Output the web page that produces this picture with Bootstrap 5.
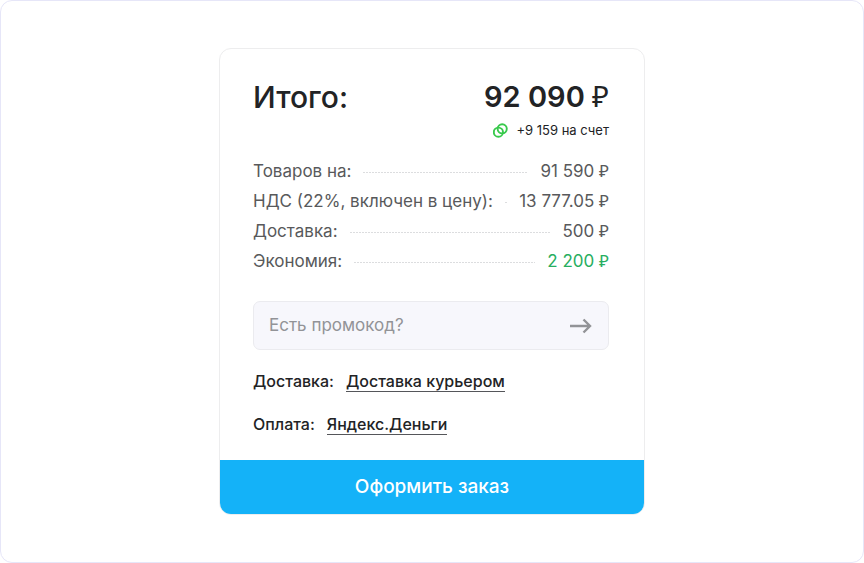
<!DOCTYPE html>
<html lang="ru">
<head>
<meta charset="utf-8">
<meta name="viewport" content="width=device-width, initial-scale=1">
<title>Оформление заказа</title>
<link href="https://cdn.jsdelivr.net/npm/bootstrap@5.3.0/dist/css/bootstrap.min.css" rel="stylesheet">
<style>
body { font-family: Inter, "Noto Sans", sans-serif; color: #222325; background: #fff; }
.page-frame { border: 1px solid #e6e6f8; border-radius: 12px; padding: 47px 16px; }
.order-card { max-width: 426px; border: 1px solid #ededee; border-radius: 12px; }
.order-body { padding: 30px 35px 25px 33px; }
.total { font-size: 30px; line-height: 36px; font-weight: 500; }
.total-sum { font-size: 29px; font-weight: 600; }
.ruble { font-family: "Noto Sans", sans-serif; font-weight: 400; line-height: 1; }
.bonus { font-size: 13px; line-height: 16px; margin-top: 7px; }
.sums { font-size: 17px; line-height: 30px; color: #58595b; margin-top: 18px; }
.sums dt, .sums dd { font-weight: 400; margin: 0; }
.leader { height: 1px; margin: 2px 12px 0; background: repeating-linear-gradient(90deg, #dcdddf 0 2px, transparent 2px 3px); }
.sums .saving { color: #27ae60; }
.promo { margin-top: 25px; height: 49px; background: #f7f7fc; border: 1px solid #ebebef; border-radius: 7px; }
.promo input, .promo input:focus { font-size: 17px; color: #58595b; padding: 1px 15px 0; background: transparent; border: 0; }
.promo input::placeholder { color: #929397; }
.promo button { padding: 0 16px; color: #929397; border: 0; }
.choices { font-size: 16px; line-height: 19px; font-weight: 500; margin-top: 22px; gap: 23px; }
.choices a { color: inherit; border-bottom: 1px solid #55565a; }
.checkout, .checkout:hover { background: #14b2f8; color: #fff; font-size: 19px; font-weight: 500; line-height: 54px; border: 0; border-radius: 0 0 11px 11px; }
</style>
</head>
<body>
<div class="page-frame min-vh-100">
  <main class="order-card mx-auto">
    <div class="order-body">
      <div class="total d-flex justify-content-between"><span>Итого:</span><span class="total-sum text-nowrap">92 090 <span class="ruble">₽</span></span></div>
      <div class="bonus d-flex justify-content-end align-items-center gap-2">
        <svg width="15" height="15" viewBox="0 0 15 15" fill="none" stroke="#38c94c" stroke-width="1.9" aria-hidden="true"><circle cx="9.2" cy="5.8" r="4.6"/><circle cx="5.4" cy="9.2" r="4.6"/></svg>
        <span>+9 159 на счет</span>
      </div>
      <dl class="sums mb-0 text-nowrap">
        <div class="d-flex align-items-center"><dt>Товаров на:</dt><span class="leader flex-grow-1"></span><dd>91 590 <span class="ruble">₽</span></dd></div>
        <div class="d-flex align-items-center"><dt>НДС (22%, включен в цену):</dt><span class="leader flex-grow-1"></span><dd>13 777.05 <span class="ruble">₽</span></dd></div>
        <div class="d-flex align-items-center"><dt>Доставка:</dt><span class="leader flex-grow-1"></span><dd>500 <span class="ruble">₽</span></dd></div>
        <div class="d-flex align-items-center"><dt>Экономия:</dt><span class="leader flex-grow-1"></span><dd class="saving">2 200 <span class="ruble">₽</span></dd></div>
      </dl>
      <form class="promo d-flex">
        <input class="form-control shadow-none" type="text" placeholder="Есть промокод?" aria-label="Есть промокод?">
        <button class="btn d-flex align-items-center" type="button" aria-label="Применить промокод">
          <svg width="23" height="16" viewBox="0 0 23 16" fill="none" stroke="currentColor" stroke-width="2.4" aria-hidden="true"><path d="M1 8H21.5M14.5 1.5L21 8L14.5 14.5"/></svg>
        </button>
      </form>
      <div class="choices d-flex flex-column">
        <div class="d-flex"><span class="me-2 pe-1">Доставка:</span><a class="text-decoration-none" href="#">Доставка курьером</a></div>
        <div class="d-flex"><span class="me-2 pe-1">Оплата:</span><a class="text-decoration-none" href="#">Яндекс.Деньги</a></div>
      </div>
    </div>
    <button class="checkout btn w-100 p-0" type="button">Оформить заказ</button>
  </main>
</div>
<script src="https://cdn.jsdelivr.net/npm/bootstrap@5.3.0/dist/js/bootstrap.bundle.min.js"></script>
</body>
</html>
